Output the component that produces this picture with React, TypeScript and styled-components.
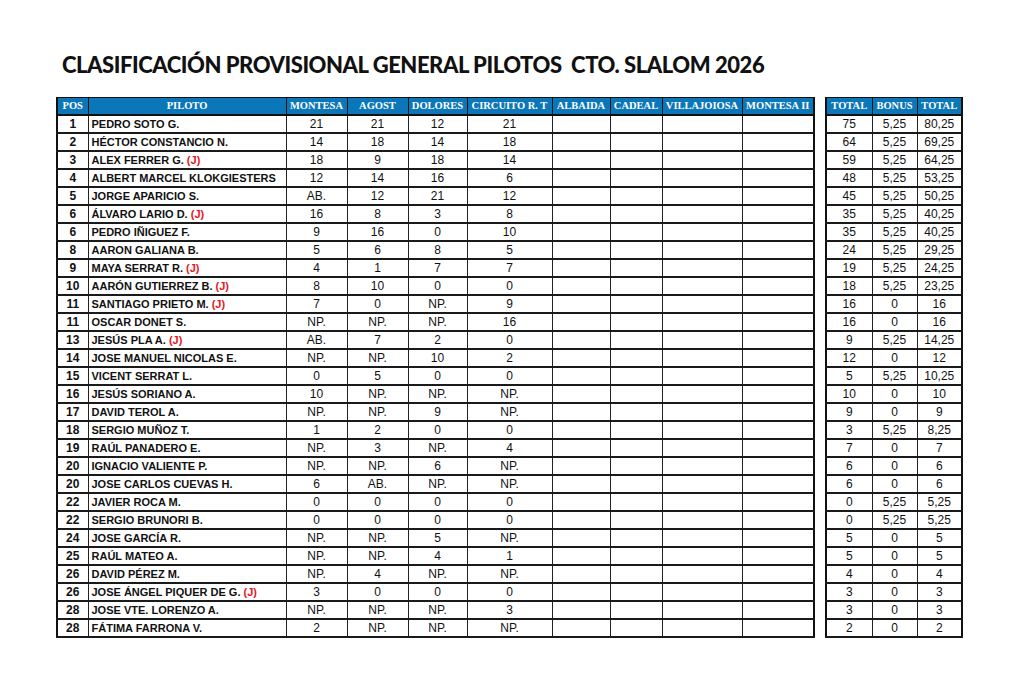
import styled, { createGlobalStyle } from 'styled-components';

type Row = {
    pos: number;
    name: string;
    junior?: boolean;
    scores: string[];
    total: string;
    bonus: string;
    final: string;
};

const rows: Row[] = [
    { pos: 1, name: 'PEDRO SOTO G.', scores: ['21', '21', '12', '21'], total: '75', bonus: '5,25', final: '80,25' },
    { pos: 2, name: 'HÉCTOR CONSTANCIO N.', scores: ['14', '18', '14', '18'], total: '64', bonus: '5,25', final: '69,25' },
    { pos: 3, name: 'ALEX FERRER G.', junior: true, scores: ['18', '9', '18', '14'], total: '59', bonus: '5,25', final: '64,25' },
    { pos: 4, name: 'ALBERT MARCEL KLOKGIESTERS', scores: ['12', '14', '16', '6'], total: '48', bonus: '5,25', final: '53,25' },
    { pos: 5, name: 'JORGE APARICIO S.', scores: ['AB.', '12', '21', '12'], total: '45', bonus: '5,25', final: '50,25' },
    { pos: 6, name: 'ÁLVARO LARIO D.', junior: true, scores: ['16', '8', '3', '8'], total: '35', bonus: '5,25', final: '40,25' },
    { pos: 6, name: 'PEDRO IÑIGUEZ F.', scores: ['9', '16', '0', '10'], total: '35', bonus: '5,25', final: '40,25' },
    { pos: 8, name: 'AARON GALIANA B.', scores: ['5', '6', '8', '5'], total: '24', bonus: '5,25', final: '29,25' },
    { pos: 9, name: 'MAYA SERRAT R.', junior: true, scores: ['4', '1', '7', '7'], total: '19', bonus: '5,25', final: '24,25' },
    { pos: 10, name: 'AARÓN GUTIERREZ B.', junior: true, scores: ['8', '10', '0', '0'], total: '18', bonus: '5,25', final: '23,25' },
    { pos: 11, name: 'SANTIAGO PRIETO M.', junior: true, scores: ['7', '0', 'NP.', '9'], total: '16', bonus: '0', final: '16' },
    { pos: 11, name: 'OSCAR DONET S.', scores: ['NP.', 'NP.', 'NP.', '16'], total: '16', bonus: '0', final: '16' },
    { pos: 13, name: 'JESÚS PLA A.', junior: true, scores: ['AB.', '7', '2', '0'], total: '9', bonus: '5,25', final: '14,25' },
    { pos: 14, name: 'JOSE MANUEL NICOLAS E.', scores: ['NP.', 'NP.', '10', '2'], total: '12', bonus: '0', final: '12' },
    { pos: 15, name: 'VICENT SERRAT L.', scores: ['0', '5', '0', '0'], total: '5', bonus: '5,25', final: '10,25' },
    { pos: 16, name: 'JESÚS SORIANO A.', scores: ['10', 'NP.', 'NP.', 'NP.'], total: '10', bonus: '0', final: '10' },
    { pos: 17, name: 'DAVID TEROL A.', scores: ['NP.', 'NP.', '9', 'NP.'], total: '9', bonus: '0', final: '9' },
    { pos: 18, name: 'SERGIO MUÑOZ T.', scores: ['1', '2', '0', '0'], total: '3', bonus: '5,25', final: '8,25' },
    { pos: 19, name: 'RAÚL PANADERO E.', scores: ['NP.', '3', 'NP.', '4'], total: '7', bonus: '0', final: '7' },
    { pos: 20, name: 'IGNACIO VALIENTE P.', scores: ['NP.', 'NP.', '6', 'NP.'], total: '6', bonus: '0', final: '6' },
    { pos: 20, name: 'JOSE CARLOS CUEVAS H.', scores: ['6', 'AB.', 'NP.', 'NP.'], total: '6', bonus: '0', final: '6' },
    { pos: 22, name: 'JAVIER ROCA M.', scores: ['0', '0', '0', '0'], total: '0', bonus: '5,25', final: '5,25' },
    { pos: 22, name: 'SERGIO BRUNORI B.', scores: ['0', '0', '0', '0'], total: '0', bonus: '5,25', final: '5,25' },
    { pos: 24, name: 'JOSE GARCÍA R.', scores: ['NP.', 'NP.', '5', 'NP.'], total: '5', bonus: '0', final: '5' },
    { pos: 25, name: 'RAÚL MATEO A.', scores: ['NP.', 'NP.', '4', '1'], total: '5', bonus: '0', final: '5' },
    { pos: 26, name: 'DAVID PÉREZ M.', scores: ['NP.', '4', 'NP.', 'NP.'], total: '4', bonus: '0', final: '4' },
    { pos: 26, name: 'JOSE ÁNGEL PIQUER DE G.', junior: true, scores: ['3', '0', '0', '0'], total: '3', bonus: '0', final: '3' },
    { pos: 28, name: 'JOSE VTE. LORENZO A.', scores: ['NP.', 'NP.', 'NP.', '3'], total: '3', bonus: '0', final: '3' },
    { pos: 28, name: 'FÁTIMA FARRONA V.', scores: ['2', 'NP.', 'NP.', 'NP.'], total: '2', bonus: '0', final: '2' },
];

const events = [
    { label: 'MONTESA', width: 61 },
    { label: 'AGOST', width: 61 },
    { label: 'DOLORES', width: 59 },
    { label: 'CIRCUITO R. T', width: 85 },
    { label: 'ALBAIDA', width: 58 },
    { label: 'CADEAL', width: 52 },
    { label: 'VILLAJOIOSA', width: 80 },
    { label: 'MONTESA II', width: 72 },
];

const sideCols = [
    { label: 'TOTAL', width: 46 },
    { label: 'BONUS', width: 45 },
    { label: 'TOTAL', width: 45 },
];

function App() {
    return (
        <Page>
            <GlobalStyle />
            <Title>CLASIFICACIÓN PROVISIONAL GENERAL PILOTOS&nbsp; CTO. SLALOM 2026</Title>
            <Tables>
                <Table>
                    <colgroup>
                        <col style={{ width: 31 }} />
                        <col style={{ width: 198 }} />
                        {events.map((e, i) => <col key={i} style={{ width: e.width }} />)}
                    </colgroup>
                    <thead>
                        <tr>
                            <Head>POS</Head>
                            <Head>PILOTO</Head>
                            {events.map((e, i) => <Head key={i}>{e.label}</Head>)}
                        </tr>
                    </thead>
                    <tbody>
                        {rows.map((r, i) => (
                            <tr key={i}>
                                <PosCell>{r.pos}</PosCell>
                                <NameCell>
                                    {r.name}
                                    {r.junior && <Junior> (J)</Junior>}
                                </NameCell>
                                {events.map((_, j) => <Cell key={j}>{r.scores[j] ?? ''}</Cell>)}
                            </tr>
                        ))}
                    </tbody>
                </Table>
                <Table>
                    <colgroup>
                        {sideCols.map((c, i) => <col key={i} style={{ width: c.width }} />)}
                    </colgroup>
                    <thead>
                        <tr>
                            {sideCols.map((c, i) => <Head key={i}>{c.label}</Head>)}
                        </tr>
                    </thead>
                    <tbody>
                        {rows.map((r, i) => (
                            <tr key={i}>
                                <Cell>{r.total}</Cell>
                                <Cell>{r.bonus}</Cell>
                                <Cell>{r.final}</Cell>
                            </tr>
                        ))}
                    </tbody>
                </Table>
            </Tables>
        </Page>
    );
}

export default App;

const GlobalStyle = createGlobalStyle`
    html, body {
        margin: 0;
        padding: 0;
        background: #ffffff;
    }
    body {
        font-family: "Liberation Sans", Arial, sans-serif;
        color: #111;
    }
`;

const Page = styled.div`
    width: 1024px;
    height: 685px;
    box-sizing: border-box;
    padding: 51px 0 0 56px;
    background: #fff;
`;

const Title = styled.h1`
    margin: 0 0 0 6px;
    font-family: Lato, "Open Sans", sans-serif;
    font-weight: 900;
    font-size: 22px;
    line-height: 28px;
    color: #111;
    letter-spacing: -0.45px;
    white-space: nowrap;
`;

const Tables = styled.div`
    display: flex;
    align-items: flex-start;
    gap: 10px;
    margin-top: 18px;
`;

const Table = styled.table`
    table-layout: fixed;
    border-collapse: collapse;
    border-left: 2px solid #111;
    border-right: 2px solid #111;
    border-top: 1px solid #111;

    td, th {
        padding: 0;
        overflow: hidden;
        white-space: nowrap;
    }
`;

const Head = styled.th`
    height: 16px;
    background: #0b76b8;
    color: #fff;
    font-family: "Liberation Serif", "Times New Roman", serif;
    font-weight: bold;
    font-size: 10.5px;
    text-align: center;
    border-left: 1px solid #111;
    border-bottom: 2px solid #111;
    line-height: 16px;
`;

const Cell = styled.td`
    height: 16px;
    line-height: 16px;
    font-size: 12px;
    text-align: center;
    border-left: 1px solid #222;
    border-bottom: 2px solid #1a1a1a;
    color: #111;
`;

const PosCell = styled(Cell)`
    font-weight: bold;
`;

const NameCell = styled(Cell)`
    text-align: left;
    padding-left: 3px !important;
    font-weight: bold;
    font-size: 11px;
`;

const Junior = styled.span`
    color: #e8141c;
    font-weight: bold;
`;
